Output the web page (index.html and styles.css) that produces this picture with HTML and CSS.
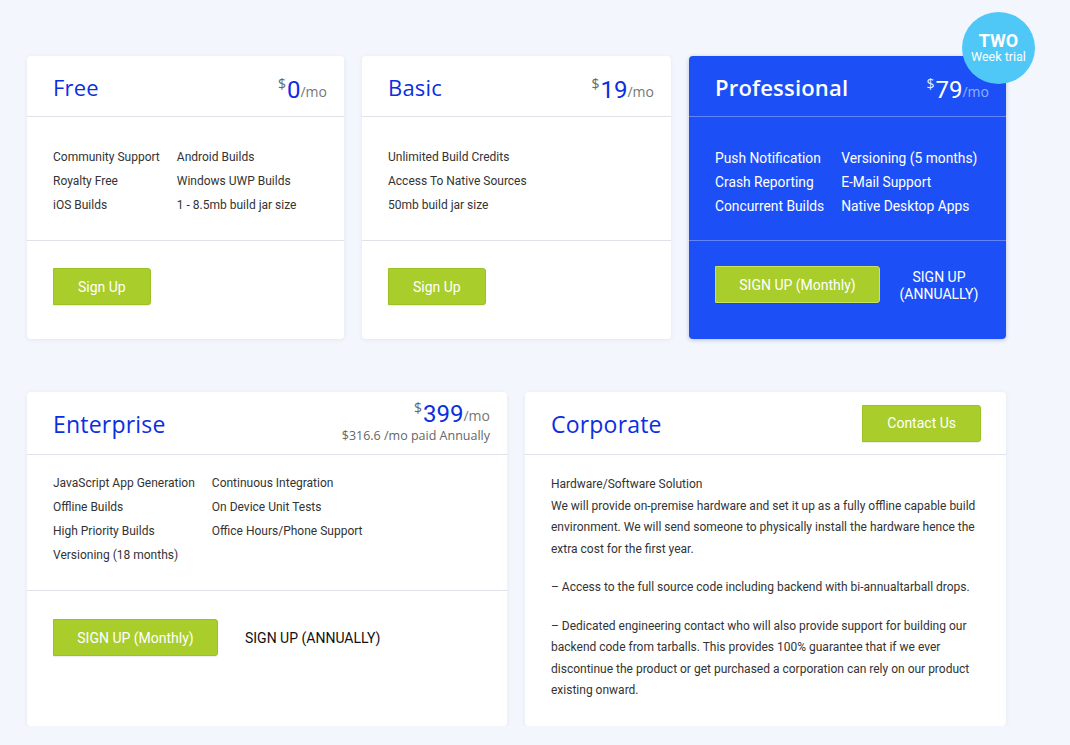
FILE: index.html
```html
<!DOCTYPE html>
<html lang="en">
<head>
<meta charset="utf-8">
<title>Pricing</title>
<link rel="stylesheet" href="styles.css">
</head>
<body>
<main class="page">
  <section class="row row-top">
    <article class="card">
      <header class="card-head">
        <h2 class="plan">Free</h2>
        <div class="price"><span class="cur">$</span><span class="amt">0</span><span class="per">/mo</span></div>
      </header>
      <ul class="features">
        <li>Community Support</li><li>Android Builds</li>
        <li>Royalty Free</li><li>Windows UWP Builds</li>
        <li>iOS Builds</li><li>1 - 8.5mb build jar size</li>
      </ul>
      <footer class="card-foot"><a class="btn">Sign Up</a></footer>
    </article>

    <article class="card">
      <header class="card-head">
        <h2 class="plan">Basic</h2>
        <div class="price"><span class="cur">$</span><span class="amt">19</span><span class="per">/mo</span></div>
      </header>
      <ul class="features single">
        <li>Unlimited Build Credits</li>
        <li>Access To Native Sources</li>
        <li>50mb build jar size</li>
      </ul>
      <footer class="card-foot"><a class="btn">Sign Up</a></footer>
    </article>

    <article class="card card-pro">
      <div class="badge"><span class="badge-big">TWO</span><span class="badge-small">Week trial</span></div>
      <header class="card-head">
        <h2 class="plan">Professional</h2>
        <div class="price"><span class="cur">$</span><span class="amt">79</span><span class="per">/mo</span></div>
      </header>
      <ul class="features">
        <li>Push Notification</li><li>Versioning (5 months)</li>
        <li>Crash Reporting</li><li>E-Mail Support</li>
        <li>Concurrent Builds</li><li>Native Desktop Apps</li>
      </ul>
      <footer class="card-foot"><a class="btn btn-wide">SIGN UP (Monthly)</a><a class="link-annual wrap">SIGN UP (ANNUALLY)</a></footer>
    </article>
  </section>

  <section class="row row-bottom">
    <article class="card card-ent">
      <header class="card-head tall">
        <h2 class="plan">Enterprise</h2>
        <div class="price-block">
          <div class="price"><span class="cur">$</span><span class="amt">399</span><span class="per">/mo</span></div>
          <div class="annual-note">$316.6 /mo paid Annually</div>
        </div>
      </header>
      <ul class="features">
        <li>JavaScript App Generation</li><li>Continuous Integration</li>
        <li>Offline Builds</li><li>On Device Unit Tests</li>
        <li>High Priority Builds</li><li>Office Hours/Phone Support</li>
        <li>Versioning (18 months)</li>
      </ul>
      <footer class="card-foot"><a class="btn btn-wide">SIGN UP (Monthly)</a><a class="link-annual">SIGN UP (ANNUALLY)</a></footer>
    </article>

    <article class="card card-corp">
      <header class="card-head tall">
        <h2 class="plan">Corporate</h2>
        <a class="btn">Contact Us</a>
      </header>
      <div class="corp-body">
        <p>Hardware/Software Solution<br>We will provide on-premise hardware and set it up as a fully offline capable build environment. We will send someone to physically install the hardware hence the extra cost for the first year.</p>
        <p>– Access to the full source code including backend with bi-annualtarball drops.</p>
        <p>– Dedicated engineering contact who will also provide support for building our backend code from tarballs. This provides 100% guarantee that if we ever discontinue the product or get purchased a corporation can rely on our product existing onward.</p>
      </div>
    </article>
  </section>
</main>
</body>
</html>
```

FILE: styles.css
```css
* { box-sizing: border-box; }

body {
  margin: 0;
  background: #f3f6fc;
  font-family: Roboto, "Liberation Sans", sans-serif;
  color: #333;
}

.page {
  padding: 56px 0 0 27px;
  width: 1006px;
  box-sizing: content-box;
}

.row {
  display: grid;
  column-gap: 18px;
}

.row-top {
  grid-template-columns: 317px 309px 317px;
}

.row-bottom {
  grid-template-columns: 480px 481px;
  margin-top: 53px;
}

.card {
  position: relative;
  background: #fff;
  border-radius: 4px;
  box-shadow: 0 1px 4px rgba(40, 60, 120, 0.08);
  display: flex;
  flex-direction: column;
}

.card-head {
  height: 61px;
  display: flex;
  align-items: center;
  justify-content: space-between;
  padding: 0 17px 0 26px;
  border-bottom: 1px solid #dfe2e8;
}

.card-head.tall {
  height: 63px;
  padding-right: 17px;
}

.plan {
  margin: 0;
  font-family: "Open Sans", "Noto Sans", sans-serif;
  font-weight: 500;
  font-size: 22px;
  color: #0b2fe0;
  letter-spacing: 0.2px;
  padding-top: 2px;
}

.price {
  display: flex;
  align-items: flex-start;
  padding-top: 8px;
  font-family: "Open Sans", sans-serif;
}

.cur {
  font-size: 14px;
  line-height: 13px;
  color: #666;
  margin-top: -3px;
  margin-right: 1px;
}

.amt {
  font-family: Roboto, sans-serif;
  font-size: 24px;
  line-height: 20px;
  color: #0b2fe0;
}

.per {
  font-size: 14px;
  color: #777;
  align-self: flex-end;
  line-height: 16px;
}

.features {
  list-style: none;
  margin: 0;
  padding: 28px 26px 23px;
  display: grid;
  grid-template-columns: auto auto;
  justify-content: start;
  column-gap: 17px;
  font-size: 12px;
  line-height: 24px;
  white-space: nowrap;
  border-bottom: 1px solid #dfe2e8;
}

.features.single {
  grid-template-columns: auto;
}

.card-foot {
  display: flex;
  align-items: center;
  padding: 27px 26px 34px;
}

.btn {
  display: inline-flex;
  align-items: center;
  justify-content: center;
  height: 37px;
  padding: 0 24px;
  background: #a9cd2b;
  border: 1px solid #9cc124;
  border-radius: 0 3px 3px 0;
  color: #fff;
  font-size: 14px;
  font-family: Roboto, sans-serif;
  box-shadow: 0 1px 1px rgba(0, 0, 0, 0.08);
  white-space: nowrap;
}

.btn-wide {
  width: 165px;
}

.link-annual {
  margin-left: 27px;
  font-size: 14px;
  color: #111;
}

/* Professional */
.card-pro {
  background: #1d4ff7;
  box-shadow: 0 1px 4px rgba(20, 40, 140, 0.25);
}

.card-pro .card-head,
.card-pro .features {
  border-bottom-color: rgba(255, 255, 255, 0.3);
}

.card-pro .plan {
  color: #fff;
  font-weight: 600;
}

.card-pro .cur { color: #e6ecff; }
.card-pro .amt { color: #fff; }
.card-pro .per { color: #8fb0ff; }

.card-pro .features {
  font-size: 13.8px;
  color: #fff;
  padding-top: 29px;
  padding-bottom: 22px;
}

.card-pro .card-foot {
  padding-top: 25px;
}

.card-pro .btn {
  border-color: #c9e35a;
}

.card-pro .link-annual {
  color: #fff;
  margin-left: 18px;
  width: 86px;
  text-align: center;
  line-height: 17px;
  padding-top: 3px;
}

.badge {
  position: absolute;
  top: -44px;
  right: -29px;
  width: 73px;
  height: 72px;
  border-radius: 50%;
  background: #4fc8f7;
  color: #fff;
  display: flex;
  flex-direction: column;
  align-items: center;
  justify-content: center;
  z-index: 2;
}

.badge-big {
  font-weight: 700;
  font-size: 18px;
  line-height: 18px;
}

.badge-small {
  font-size: 12.5px;
  line-height: 14px;
}

/* Enterprise */
.price-block {
  display: flex;
  flex-direction: column;
  align-items: flex-end;
  padding-top: 2px;
}

.price-block .price {
  padding-top: 0;
}

.annual-note {
  font-family: "Open Sans", sans-serif;
  font-size: 12.5px;
  color: #666;
  margin-top: 3px;
}

.card-ent .plan {
  font-size: 23px;
}

.card-ent .features {
  padding-top: 16px;
  padding-bottom: 23px;
}

.card-ent .card-foot {
  padding-top: 28px;
}

/* Corporate */
.card-corp .plan {
  font-size: 23px;
}

.card-corp .card-head {
  padding-right: 25px;
}

.corp-body {
  padding: 19px 26px 24px;
  font-size: 12px;
  line-height: 21.5px;
}

.corp-body p {
  margin: 0 0 17px;
}

.corp-body p:last-child {
  margin-bottom: 0;
}
```
